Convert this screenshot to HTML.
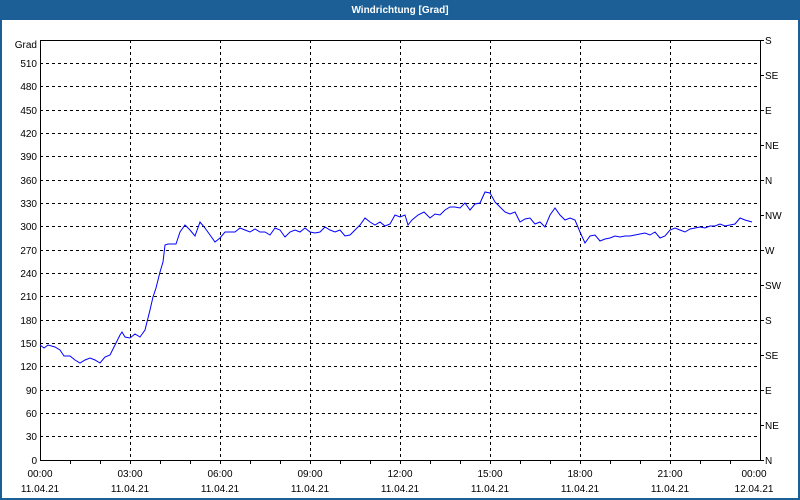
<!DOCTYPE html>
<html><head><meta charset="utf-8"><style>
html,body{margin:0;padding:0;background:#fff;}
svg{display:block;font-family:"Liberation Sans",sans-serif;}
</style></head><body>
<svg width="800" height="500" viewBox="0 0 800 500" xmlns="http://www.w3.org/2000/svg">
<rect x="0" y="0" width="800" height="500" fill="#1b5f96"/>
<rect x="2" y="20" width="796" height="478" fill="#fff"/>
<text x="400" y="13" fill="#fff" font-size="10" font-weight="bold" text-anchor="middle">Windrichtung [Grad]</text>
<g stroke="#000" stroke-width="1" stroke-dasharray="3,3" fill="none">
<path d="M40 63.5H760M40 86.5H760M40 110.5H760M40 133.5H760M40 156.5H760M40 180.5H760M40 203.5H760M40 226.5H760M40 250.5H760M40 273.5H760M40 296.5H760M40 320.5H760M40 343.5H760M40 366.5H760M40 390.5H760M40 413.5H760M40 436.5H760"/>
<path d="M130.5 40V460M220.5 40V460M310.5 40V460M400.5 40V460M490.5 40V460M580.5 40V460M670.5 40V460"/>
</g>
<rect x="40.5" y="40.5" width="720" height="420" fill="none" stroke="#000"/>
<g stroke="#000">
<path d="M70.5 460v4M100.5 460v4M130.5 460v4M160.5 460v4M190.5 460v4M220.5 460v4M250.5 460v4M280.5 460v4M310.5 460v4M340.5 460v4M370.5 460v4M400.5 460v4M430.5 460v4M460.5 460v4M490.5 460v4M520.5 460v4M550.5 460v4M580.5 460v4M610.5 460v4M640.5 460v4M670.5 460v4M700.5 460v4M730.5 460v4"/>
<path d="M760 40.5h4M760 75.5h4M760 110.5h4M760 145.5h4M760 180.5h4M760 215.5h4M760 250.5h4M760 285.5h4M760 320.5h4M760 355.5h4M760 390.5h4M760 425.5h4M760 460.5h4"/>
</g>
<g font-size="10" fill="#000" text-anchor="end">
<text x="37" y="48">Grad</text>
<text x="37" y="67">510</text><text x="37" y="90">480</text><text x="37" y="114">450</text><text x="37" y="137">420</text><text x="37" y="160">390</text><text x="37" y="184">360</text><text x="37" y="207">330</text><text x="37" y="230">300</text><text x="37" y="254">270</text><text x="37" y="277">240</text><text x="37" y="300">210</text><text x="37" y="324">180</text><text x="37" y="347">150</text><text x="37" y="370">120</text><text x="37" y="394">90</text><text x="37" y="417">60</text><text x="37" y="440">30</text><text x="37" y="464">0</text>
</g>
<g font-size="10" fill="#000">
<text x="765" y="44">S</text><text x="765" y="79">SE</text><text x="765" y="114">E</text><text x="765" y="149">NE</text><text x="765" y="184">N</text><text x="765" y="219">NW</text><text x="765" y="254">W</text><text x="765" y="289">SW</text><text x="765" y="324">S</text><text x="765" y="359">SE</text><text x="765" y="394">E</text><text x="765" y="429">NE</text><text x="765" y="464">N</text>
</g>
<g font-size="10" fill="#000" text-anchor="middle">
<text x="40" y="477">00:00</text><text x="40" y="492">11.04.21</text>
<text x="130" y="477">03:00</text><text x="130" y="492">11.04.21</text>
<text x="220" y="477">06:00</text><text x="220" y="492">11.04.21</text>
<text x="310" y="477">09:00</text><text x="310" y="492">11.04.21</text>
<text x="400" y="477">12:00</text><text x="400" y="492">11.04.21</text>
<text x="490" y="477">15:00</text><text x="490" y="492">11.04.21</text>
<text x="580" y="477">18:00</text><text x="580" y="492">11.04.21</text>
<text x="670" y="477">21:00</text><text x="670" y="492">11.04.21</text>
<text x="754" y="477">00:00</text><text x="754" y="492">12.04.21</text>
</g>
<polyline fill="none" stroke="#0000ff" stroke-width="1" points="40,345 44,348 48,345 55,347 60,350 64,356 70,356 75,360 80,363 85,360 90,358 95,360 100,363 105,357 110,355 115,345 120,335 122,332 125,337 130,338 135,334 140,337 145,330 150,310 153,297 156,288 160,272 163,262 165,245 168,244 172,244 176,244 180,232 185,225 190,230 195,236 200,222 205,228 210,235 215,242 220,238 225,232 230,232 235,232 240,228 245,230 250,232 255,229 260,232 265,232 270,235 275,228 280,230 285,237 290,232 295,230 300,232 305,228 310,232 315,233 320,232 325,227 330,230 335,232 340,230 345,236 350,235 355,230 360,225 365,218 370,222 375,225 380,222 385,226 390,224 395,215 400,217 405,215 408,225 412,220 418,215 424,212 430,218 435,214 440,215 445,210 450,207 455,207 460,208 465,203 470,210 475,204 480,203 485,192 490,193 495,202 500,207 505,212 510,214 515,212 520,222 525,219 530,218 535,224 540,222 545,227 550,215 555,208 560,215 565,220 570,218 575,220 580,232 585,243 590,236 595,235 600,241 605,239 610,238 615,236 620,237 625,236 630,236 635,235 640,234 645,233 650,235 655,232 660,238 665,236 670,230 675,228 680,230 685,232 690,229 695,228 700,227 705,228 710,226 715,226 720,224 725,226 730,225 735,224 740,218 745,220 752,222"/>
</svg>
</body></html>
